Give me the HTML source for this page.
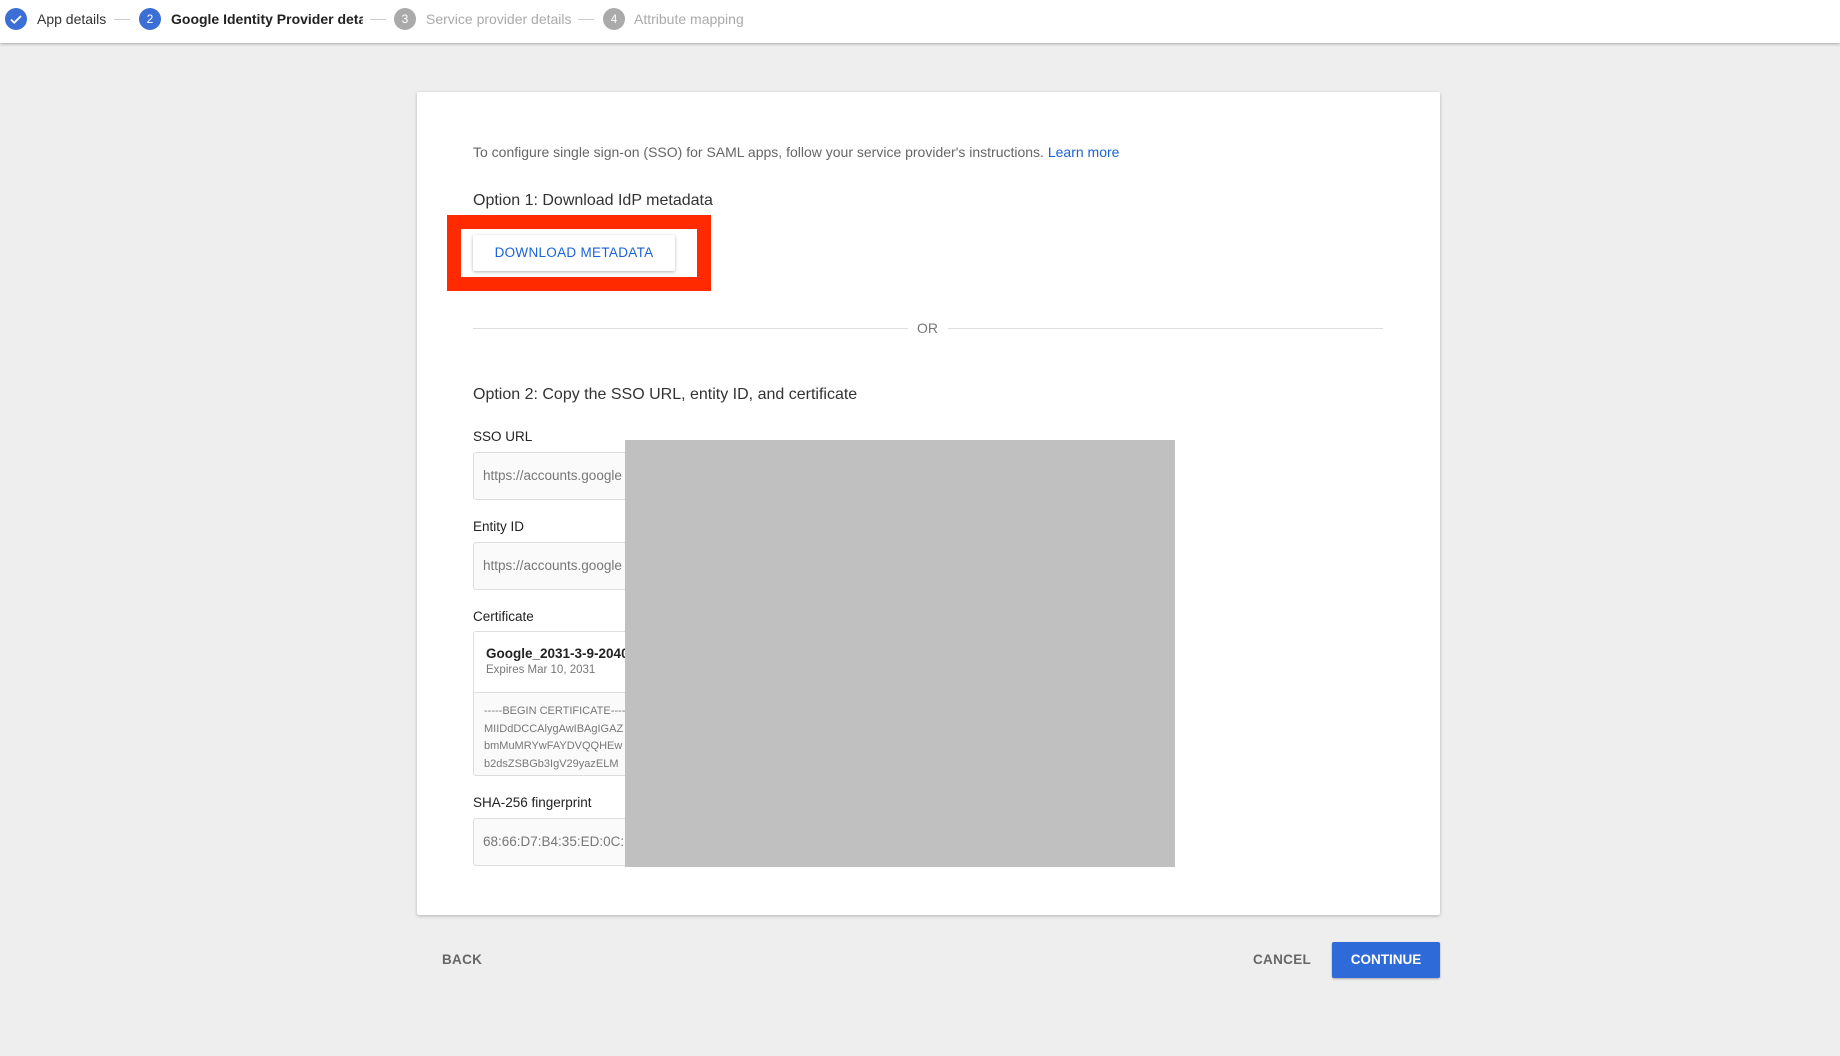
<!DOCTYPE html>
<html><head><style>
*{margin:0;padding:0;box-sizing:border-box}
body{width:1840px;height:1056px;background:#eeeeee;font-family:"Liberation Sans",Arial,sans-serif;position:relative;overflow:hidden}
.top{position:absolute;left:0;top:0;width:1840px;height:43px;background:#fff;box-shadow:0 1px 3px rgba(0,0,0,.3)}
.a{position:absolute;white-space:nowrap}
.c{position:absolute;width:22px;height:22px;border-radius:50%;top:8px;color:#fff;font-size:12px;text-align:center;line-height:22px}
.st{top:11px;font-size:14px}
.dash{position:absolute;top:19px;width:16px;height:1px;background:#ccc}
.card{position:absolute;left:417px;top:92px;width:1023px;height:823px;background:#fff;box-shadow:0 1px 3px rgba(0,0,0,.25);border-radius:2px}
.lbl{font-size:13.5px;color:#222}
.fld{position:absolute;left:473px;width:160px;background:#fafafa;border:1px solid #ddd;border-radius:3px;font-size:13.5px;color:#777;padding-left:9px}
</style></head><body>
<div class="top">
<div class="c" style="left:5px;background:#3b6fd6">
<svg width="22" height="22" viewBox="0 0 22 22"><path d="M6 11.5l3.2 3.2L16 8" stroke="#fff" stroke-width="1.8" fill="none"/></svg></div>
<div class="a st" style="left:37px;color:#333">App details</div>
<div class="dash" style="left:114px"></div>
<div class="c" style="left:139px;background:#3b6fd6">2</div>
<div class="a st" style="left:171px;color:#222;font-weight:bold;width:192px;overflow:hidden">Google Identity Provider details</div>
<div class="dash" style="left:370px"></div>
<div class="c" style="left:394px;background:#aaa">3</div>
<div class="a st" style="left:426px;color:#aaa">Service provider details</div>
<div class="dash" style="left:578px"></div>
<div class="c" style="left:603px;background:#aaa">4</div>
<div class="a st" style="left:634px;color:#aaa">Attribute mapping</div>
</div>
<div class="card"></div>
<div class="a" style="left:473px;top:144px;font-size:14px;color:#666">To configure single sign-on (SSO) for SAML apps, follow your service provider's instructions. <span style="color:#1a63d6">Learn more</span></div>
<div class="a" style="left:473px;top:192px;font-size:16px;color:#333">Option 1: Download IdP metadata</div>
<div class="a" style="left:447px;top:215px;width:264px;height:76px;border:14px solid #ff2a00;background:#fff"></div>
<div class="a" style="left:473px;top:235px;width:202px;height:36px;background:#fff;box-shadow:0 1px 3px rgba(0,0,0,.3);border-radius:2px;color:#1a63d6;font-size:13.5px;text-align:center;line-height:36px;letter-spacing:.3px">DOWNLOAD METADATA</div>
<div class="a" style="left:473px;top:328px;width:435px;height:1px;background:#ddd"></div>
<div class="a" style="left:948px;top:328px;width:435px;height:1px;background:#ddd"></div>
<div class="a" style="left:917px;top:320px;font-size:14px;color:#777">OR</div>
<div class="a" style="left:473px;top:386px;font-size:16px;color:#333">Option 2: Copy the SSO URL, entity ID, and certificate</div>
<div class="a lbl" style="left:473px;top:429px">SSO URL</div>
<div class="fld" style="top:452px;height:48px;line-height:46px">https://accounts.google</div>
<div class="a lbl" style="left:473px;top:519px">Entity ID</div>
<div class="fld" style="top:542px;height:48px;line-height:46px">https://accounts.google</div>
<div class="a lbl" style="left:473px;top:609px">Certificate</div>
<div class="a" style="left:473px;top:631px;width:160px;height:145px;border:1px solid #ddd;border-radius:3px;background:#fff;overflow:hidden">
<div style="padding:14px 0 0 12px;font-size:13.5px;font-weight:bold;color:#222">Google_2031-3-9-2040</div>
<div style="padding:3px 0 0 12px;font-size:11.5px;color:#777">Expires Mar 10, 2031</div>
<div style="position:absolute;top:60px;left:0;right:0;bottom:0;background:#fafafa;border-top:1px solid #ddd;padding:10px 0 0 10px;font-size:11px;color:#777;line-height:17.5px">-----BEGIN CERTIFICATE-----<br>MIIDdDCCAlygAwIBAgIGAZ<br>bmMuMRYwFAYDVQQHEw<br>b2dsZSBGb3IgV29yazELM</div></div>
<div class="a lbl" style="left:473px;top:795px">SHA-256 fingerprint</div>
<div class="fld" style="top:818px;height:48px;line-height:46px">68:66:D7:B4:35:ED:0C:D</div>
<div class="a" style="left:625px;top:440px;width:550px;height:427px;background:#c0c0c0"></div>
<div class="a" style="left:442px;top:952px;font-size:13.5px;color:#666;font-weight:bold;letter-spacing:.3px">BACK</div>
<div class="a" style="left:1253px;top:952px;font-size:13.5px;color:#666;font-weight:bold;letter-spacing:.3px">CANCEL</div>
<div class="a" style="left:1332px;top:942px;width:108px;height:36px;background:#2f6ad9;border-radius:2px;color:#fff;font-size:13.5px;font-weight:bold;text-align:center;line-height:36px;box-shadow:0 1px 2px rgba(0,0,0,.3)">CONTINUE</div>
</body></html>
